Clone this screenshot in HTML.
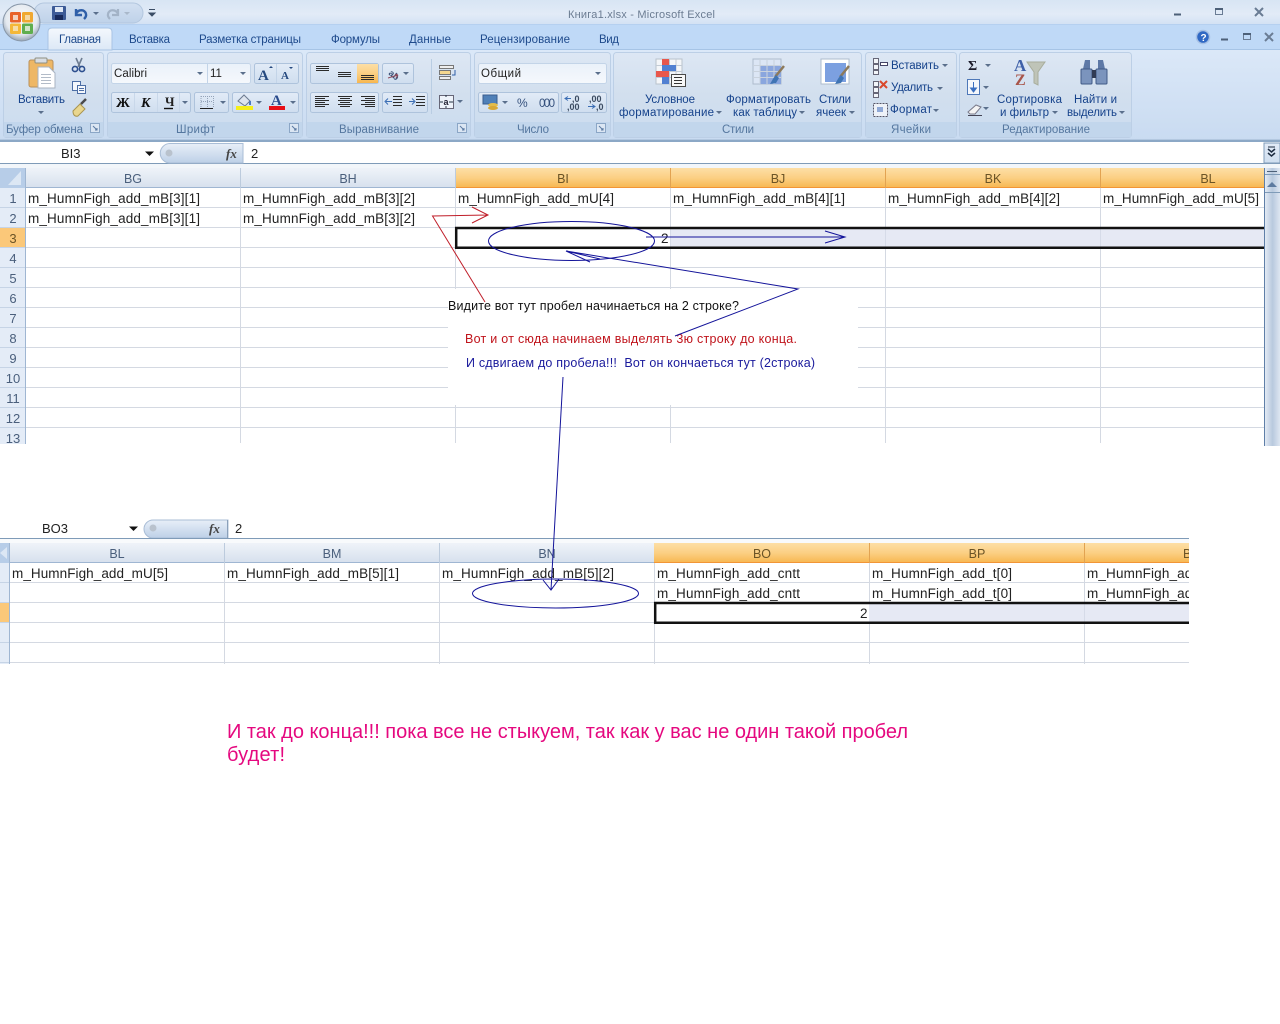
<!DOCTYPE html>
<html><head><meta charset="utf-8"><title>Книга1.xlsx - Microsoft Excel</title>
<style>
html,body{margin:0;padding:0;background:#fff;width:1280px;height:1024px;overflow:hidden}
svg{display:block;font-family:"Liberation Sans","Noto Sans CJK SC",sans-serif}
.r{font-size:11.5px;fill:#15428b}
.t{font-size:11.5px;fill:#1e4a8c}
.l{font-size:11.5px;fill:#55779f}
.c{font-size:13.5px;fill:#222}
.h{font-size:12.5px;fill:#4a5f7c;text-anchor:middle}
.hs{font-size:12.5px;fill:#6b5426;text-anchor:middle}
.n{font-size:13px;fill:#4a5f7c;text-anchor:middle}
.f{font-size:13px;fill:#222}
</style></head><body>
<svg width="1280" height="1024" viewBox="0 0 1280 1024" xmlns="http://www.w3.org/2000/svg">
<defs>
<linearGradient id="tb" x1="0" y1="0" x2="0" y2="1"><stop offset="0" stop-color="#d8e5f4"/><stop offset=".6" stop-color="#e2ebf7"/><stop offset="1" stop-color="#d3e2f4"/></linearGradient>
<linearGradient id="rb" x1="0" y1="0" x2="0" y2="1"><stop offset="0" stop-color="#dbe8f8"/><stop offset="1" stop-color="#c9dbf1"/></linearGradient>
<linearGradient id="gr" x1="0" y1="0" x2="0" y2="1"><stop offset="0" stop-color="#dde7f4"/><stop offset=".5" stop-color="#d2dfee"/><stop offset="1" stop-color="#cbdcf0"/></linearGradient>
<linearGradient id="tab" x1="0" y1="0" x2="0" y2="1"><stop offset="0" stop-color="#f4f8fd"/><stop offset="1" stop-color="#dce8f6"/></linearGradient>
<linearGradient id="btn" x1="0" y1="0" x2="0" y2="1"><stop offset="0" stop-color="#e2ebf7"/><stop offset="1" stop-color="#cfdeef"/></linearGradient>
<linearGradient id="box" x1="0" y1="0" x2="0" y2="1"><stop offset="0" stop-color="#eaf1fa"/><stop offset="1" stop-color="#f5f8fc"/></linearGradient>
<linearGradient id="org" x1="0" y1="0" x2="0" y2="1"><stop offset="0" stop-color="#fddfa6"/><stop offset=".5" stop-color="#fbcf83"/><stop offset="1" stop-color="#f7b64f"/></linearGradient>
<linearGradient id="hd" x1="0" y1="0" x2="0" y2="1"><stop offset="0" stop-color="#eff3f9"/><stop offset="1" stop-color="#d6e0ed"/></linearGradient>
<linearGradient id="pill" x1="0" y1="0" x2="0" y2="1"><stop offset="0" stop-color="#e8eff8"/><stop offset="1" stop-color="#bdd0e7"/></linearGradient>
<linearGradient id="sb" x1="0" y1="0" x2="1" y2="0"><stop offset="0" stop-color="#e3eaf4"/><stop offset=".5" stop-color="#b8c9de"/><stop offset="1" stop-color="#dde6f1"/></linearGradient>
<linearGradient id="qa" x1="0" y1="0" x2="0" y2="1"><stop offset="0" stop-color="#d3e0f1"/><stop offset="1" stop-color="#bfd2e9"/></linearGradient>
<radialGradient id="orb" cx=".5" cy=".4" r=".6"><stop offset="0" stop-color="#fbfcfe"/><stop offset=".7" stop-color="#e4e9ef"/><stop offset="1" stop-color="#96a5b5"/></radialGradient>
<clipPath id="cp2"><rect x="0" y="536" width="1189" height="130"/></clipPath>
<clipPath id="cp1"><rect x="0" y="165" width="1264" height="283"/></clipPath>
<g id="dn"><path d="M-3 0h6l-3 3z" fill="#5a6f8c"/></g>
<g id="launch"><rect x="-4.500" y="-4.500" width="9" height="9" fill="#dbe6f3" stroke="#8ba6c6"/><path d="M-2-2l4 4M2 0v2h-2" stroke="#5c7ba3" fill="none"/></g>
</defs>

<!-- title bar -->
<rect width="1280" height="24" fill="url(#tb)"/>
<rect y="24" width="1280" height="26" fill="#bfd9f7"/>
<rect y="24" width="1280" height="1" fill="#b5d0f0"/>
<rect y="49" width="1280" height="1" fill="#a6c4e6"/>
<!-- ribbon -->
<rect y="50" width="1280" height="90" fill="url(#rb)"/>
<rect y="139" width="1280" height="1" fill="#b3c8e0"/>
<rect y="140" width="1280" height="2" fill="#8ca8c6"/>
<text x="568" y="18" font-size="11" fill="#6b7c92" textLength="147">Книга1.xlsx - Microsoft Excel</text>

<!-- QAT -->
<rect x="34" y="3" width="109" height="20" rx="10" fill="url(#qa)" stroke="#b2c6de"/>
<!-- office orb -->
<circle cx="21.500" cy="22.500" r="18.500" fill="url(#orb)" stroke="#8796a8"/>
<g>
<rect x="10" y="12" width="11" height="10.500" rx="1.500" fill="#e8632a"/>
<rect x="22" y="12" width="11" height="10.500" rx="1.500" fill="#f0a830"/>
<rect x="10" y="23.500" width="11" height="10.500" rx="1.500" fill="#f4b838"/>
<rect x="22" y="23.500" width="11" height="10.500" rx="1.500" fill="#5fae4e"/>
<rect x="13" y="15" width="5" height="5" fill="#f7f7f2" opacity=".75"/><rect x="25" y="26" width="5" height="5" fill="#f7f7f2" opacity=".75"/><rect x="25" y="15" width="5" height="5" fill="#f7f7f2" opacity=".6"/><rect x="13" y="26" width="5" height="5" fill="#f7f7f2" opacity=".6"/>
</g>
<!-- save -->
<rect x="52" y="6" width="14" height="14" rx="1" fill="#3c5a96"/><rect x="55" y="7" width="8" height="5" fill="#dfe8f5"/><rect x="55" y="15" width="8" height="5" fill="#17295a"/>
<!-- undo / redo -->
<path d="M76 9v6h6M76 14c2-5 9-5 10 0 .5 2-1 4-2 5" fill="none" stroke="#2f5fa8" stroke-width="2.400"/>
<use href="#dn" x="96" y="12"/>
<path d="M118 9v6h-6M118 14c-2-5-9-5-10 0-.5 2 1 4 2 5" fill="none" stroke="#a3b3c7" stroke-width="2.200"/>
<path d="M124 12h6l-3 3z" fill="#a9b8ca"/>
<path d="M149 9.500h6M149 13h6l-3 3z" stroke="#3b4d66" fill="#3b4d66"/>

<!-- tabs -->
<path d="M48 50V32q0-4 4-4h56q4 0 4 4v18z" fill="url(#tab)" stroke="#a9c4e4"/>
<text class="t" x="59" y="43" textLength="42">Главная</text>
<text class="t" x="129" y="43" textLength="41">Вставка</text>
<text class="t" x="199" y="43" textLength="102">Разметка страницы</text>
<text class="t" x="331" y="43" textLength="49">Формулы</text>
<text class="t" x="409" y="43" textLength="42">Данные</text>
<text class="t" x="480" y="43" textLength="90">Рецензирование</text>
<text class="t" x="599" y="43" textLength="20">Вид</text>

<!-- window buttons -->
<path d="M1174 14.500h7" stroke="#4d6078" stroke-width="2"/>
<rect x="1215.500" y="8.500" width="7" height="6" fill="none" stroke="#6a7c94"/><path d="M1215 9h8" stroke="#4d6078" stroke-width="2"/>
<path d="M1255 8l8 8M1263 8l-8 8" stroke="#6a7c94" stroke-width="2"/>
<circle cx="1203" cy="37" r="6.500" fill="#2f68c4" stroke="#a6c0e4" stroke-width="1.500"/><text x="1200.500" y="41" font-size="10" font-weight="bold" fill="#fff">?</text>
<path d="M1221 39.500h7" stroke="#4d6078" stroke-width="2"/>
<rect x="1243.500" y="33.500" width="7" height="6" fill="none" stroke="#6a7c94"/><path d="M1243 34h8" stroke="#4d6078" stroke-width="2"/>
<path d="M1265 33l8 8M1273 33l-8 8" stroke="#6a7c94" stroke-width="2"/>

<!-- groups -->
<g fill="url(#gr)" stroke="#bccfe6">
<rect x="3.500" y="52.500" width="100" height="85" rx="3"/>
<rect x="107.500" y="52.500" width="195" height="85" rx="3"/>
<rect x="306.500" y="52.500" width="164" height="85" rx="3"/>
<rect x="474.500" y="52.500" width="136" height="85" rx="3"/>
<rect x="613.500" y="52.500" width="248" height="85" rx="3"/>
<rect x="865.500" y="52.500" width="91" height="85" rx="3"/>
<rect x="959.500" y="52.500" width="172" height="85" rx="3"/>
</g>
<g fill="#c2d6ec">
<rect x="4" y="122" width="99" height="15"/><rect x="108" y="122" width="194" height="15"/><rect x="307" y="122" width="163" height="15"/><rect x="475" y="122" width="135" height="15"/><rect x="614" y="122" width="247" height="15"/><rect x="866" y="122" width="90" height="15"/><rect x="960" y="122" width="171" height="15"/>
</g>
<text class="l" x="6" y="133" textLength="77">Буфер обмена</text>
<text class="l" x="176" y="133" textLength="39">Шрифт</text>
<text class="l" x="339" y="133" textLength="80">Выравнивание</text>
<text class="l" x="517" y="133" textLength="32">Число</text>
<text class="l" x="722" y="133" textLength="32">Стили</text>
<text class="l" x="891" y="133" textLength="40">Ячейки</text>
<text class="l" x="1002" y="133" textLength="88">Редактирование</text>
<use href="#launch" x="95" y="128"/><use href="#launch" x="294" y="128"/><use href="#launch" x="462" y="128"/><use href="#launch" x="601" y="128"/>

<!-- clipboard -->
<rect x="29" y="60" width="24" height="27" rx="2" fill="#eeb765" stroke="#b9905a"/>
<rect x="35" y="58" width="12" height="5" rx="1" fill="#d8dde3" stroke="#8f8f80"/>
<path d="M38 67h11l6 6v15H38z" fill="#fff" stroke="#a8b3c2"/>
<path d="M41 74.500h10M41 77.500h10M41 80.500h10M41 83.500h10" stroke="#b3bcc8"/>
<text class="r" x="18" y="103" textLength="47">Вставить</text>
<use href="#dn" x="41" y="111"/>
<!-- scissors -->
<path d="M76 58l4 9M82 58l-4 9" stroke="#6e7d92" stroke-width="1.600"/><circle cx="75" cy="69" r="2.600" fill="none" stroke="#2d4f8e" stroke-width="1.600"/><circle cx="82" cy="69" r="2.600" fill="none" stroke="#2d4f8e" stroke-width="1.600"/>
<!-- copy -->
<rect x="72.500" y="81.500" width="8" height="9" fill="#f5f8fc" stroke="#4d6fa6"/><rect x="77.500" y="85.500" width="8" height="8" fill="#f5f8fc" stroke="#4d6fa6"/><path d="M79 88.500h5M79 90.500h5" stroke="#4d6fa6"/>
<!-- brush -->
<path d="M73 111l7-7 5 5-7 7c-3 1-5-1-5-5z" fill="#e9d68e" stroke="#a8944f"/><path d="M81 104l5-5" stroke="#4a4a4a" stroke-width="2.500"/>

<!-- font -->
<rect x="111.500" y="63.500" width="139" height="20" rx="2" fill="url(#box)" stroke="#c3d4e8"/>
<path d="M207.500 63v20" stroke="#c3d4e8"/>
<text x="114" y="77" font-size="11.500" fill="#222" textLength="33">Calibri</text>
<text x="210" y="77" font-size="11.500" fill="#222">11</text>
<use href="#dn" x="200" y="72"/><use href="#dn" x="243" y="72"/>
<rect x="254.500" y="63.500" width="44" height="20" rx="2" fill="url(#btn)" stroke="#aec3dc"/>
<path d="M276.500 64v19" stroke="#c3d4e8"/>
<text x="258" y="80" font-size="15" font-weight="bold" font-family="Liberation Serif" fill="#25497f">A</text><path d="M269 68l2-2 2 2z" fill="#25497f"/>
<text x="281" y="79" font-size="11" font-weight="bold" font-family="Liberation Serif" fill="#25497f">A</text><path d="M289 67l2 2 2-2z" fill="#25497f"/>
<rect x="111.500" y="92.500" width="79" height="20" rx="2" fill="url(#btn)" stroke="#aec3dc"/>
<path d="M134.500 93v19M157.500 93v19M179.500 93v19" stroke="#c9d8ea"/>
<text x="116" y="107" font-size="14" font-weight="bold" font-family="Liberation Serif" fill="#111">Ж</text>
<text x="141" y="107" font-size="14" font-weight="bold" font-style="italic" font-family="Liberation Serif" fill="#111">К</text>
<text x="165" y="106" font-size="13" font-weight="bold" font-family="Liberation Serif" fill="#222">Ч</text><path d="M164 108.500h9" stroke="#111" stroke-width="1.400"/>
<use href="#dn" x="185" y="101"/>
<rect x="194.500" y="92.500" width="34" height="20" rx="2" fill="url(#btn)" stroke="#aec3dc"/>
<path d="M201 96.500h12M201 101.500h12M201 96v12M207.500 96v12M213.500 96v12" stroke="#94a3b8" stroke-dasharray="1 1"/><path d="M200 108.500h13" stroke="#222"/>
<use href="#dn" x="223" y="101"/>
<rect x="232.500" y="92.500" width="66" height="20" rx="2" fill="url(#btn)" stroke="#aec3dc"/>
<path d="M238 101l6-6 6 6-5 5z" fill="#dde4ee" stroke="#6b7a90"/><path d="M250 101v4" stroke="#4a7ac0" stroke-width="2"/>
<rect x="236" y="106" width="17" height="4" fill="#f5ef1a"/>
<use href="#dn" x="259" y="101"/>
<text x="271" y="105" font-size="15" font-weight="bold" font-family="Liberation Serif" fill="#2a4b8c">A</text>
<rect x="269" y="106" width="16" height="4" fill="#e80f17"/>
<use href="#dn" x="293" y="101"/>

<!-- align -->
<rect x="310.500" y="63.500" width="68" height="20" rx="2" fill="url(#btn)" stroke="#aec3dc"/>
<rect x="357" y="64" width="21" height="19" fill="url(#org)"/>
<path d="M316 66.500h13M316 68.500h13M316 70.500h13M338 72.500h13M338 74.500h13M338 76.500h13M361 75.500h13M361 77.500h13M361 79.500h13" stroke="#2b2b2b"/>
<rect x="382.500" y="63.500" width="31" height="20" rx="2" fill="url(#btn)" stroke="#aec3dc"/>
<text x="388" y="74" font-size="9" font-weight="bold" fill="#41557a" transform="rotate(40 388 74)">ab</text><path d="M388 78l10-3M398 75l-3-1M398 75l-2 3" stroke="#8d4a5b" fill="none"/><use href="#dn" x="406" y="72"/>
<path d="M431.500 59v55" stroke="#b9cde3"/>
<rect x="439.500" y="65.500" width="14" height="3" fill="#eee" stroke="#777"/><rect x="439.500" y="70.500" width="11" height="4" fill="#f5d78e" stroke="#777"/><rect x="439.500" y="76.500" width="11" height="3" fill="#eee" stroke="#777"/><path d="M455 70v5h-3" stroke="#2f5fa8" fill="none"/>
<rect x="439.500" y="95.500" width="14" height="13" fill="#eef3fa" stroke="#667"/><text x="443.500" y="105" font-size="9" font-weight="bold" fill="#223">a</text><path d="M446 95v2M446 106v2M440 102h3M449 102h4" stroke="#234"/><use href="#dn" x="460" y="100"/>
<rect x="310.500" y="92.500" width="68" height="20" rx="2" fill="url(#btn)" stroke="#aec3dc"/>
<path d="M315 96.500h14M315 98.500h10M315 100.500h14M315 102.500h10M315 104.500h14M315 106.500h10M338 96.500h14M340 98.500h10M338 100.500h14M340 102.500h10M338 104.500h14M340 106.500h10M361 96.500h14M365 98.500h10M361 100.500h14M365 102.500h10M361 104.500h14M365 106.500h10" stroke="#2b2b2b"/>
<rect x="382.500" y="92.500" width="45" height="20" rx="2" fill="url(#btn)" stroke="#aec3dc"/>
<path d="M393 96.500h9M393 99.500h9M393 102.500h9M393 105.500h9M416 96.500h9M416 99.500h9M416 102.500h9M416 105.500h9" stroke="#2b2b2b"/>
<path d="M392 101.500h-6m2-3l-3 3 3 3M409 101.500h5m-2-3l3 3-3 3" stroke="#3a6db4" fill="none"/>

<!-- number -->
<rect x="478.500" y="63.500" width="128" height="20" rx="2" fill="url(#box)" stroke="#c3d4e8"/>
<text x="481" y="77" font-size="11.500" fill="#222" textLength="40">Общий</text>
<use href="#dn" x="598" y="72"/>
<rect x="478.500" y="92.500" width="80" height="20" rx="2" fill="url(#btn)" stroke="#aec3dc"/>
<rect x="483" y="95" width="14" height="9" fill="#4f80b8" stroke="#3a5d8e"/><ellipse cx="493" cy="105" rx="5" ry="2" fill="#e4bc4a"/><ellipse cx="493" cy="108" rx="5" ry="2" fill="#d8a836"/>
<use href="#dn" x="505" y="101"/>
<text x="517" y="107" font-size="12" fill="#34507c" textLength="13">%</text>
<text x="539" y="107" font-size="11.500" fill="#34507c" textLength="16">000</text>
<rect x="561.500" y="92.500" width="45" height="20" rx="2" fill="url(#btn)" stroke="#aec3dc"/>
<text x="572" y="102" font-size="9" font-weight="bold" fill="#3a4a60">,0</text><text x="567" y="110" font-size="9" font-weight="bold" fill="#3a4a60">,00</text><path d="M565 98.500h6m-3-2l-3 2 3 2" stroke="#3a6db4" fill="none"/>
<text x="589" y="102" font-size="9" font-weight="bold" fill="#3a4a60">,00</text><text x="596" y="110" font-size="9" font-weight="bold" fill="#3a4a60">,0</text><path d="M588 106.500h7m-3-2l3 2-3 2" stroke="#3a6db4" fill="none"/>

<!-- styles -->
<rect x="656" y="59" width="26" height="25" fill="#f4f6f9" stroke="#b9c2cc"/>
<path d="M656 65.500h26M656 71.500h26M656 77.500h26M662.500 59v25M669.500 59v25M676 59v25" stroke="#c3cbd5"/>
<rect x="662" y="59" width="7" height="6" fill="#e8574c"/><rect x="662" y="65" width="7" height="6" fill="#5180d2"/><rect x="669" y="65" width="7" height="6" fill="#5180d2"/><rect x="656" y="71" width="13" height="6" fill="#e8574c"/><rect x="662" y="77" width="7" height="7" fill="#5180d2"/>
<rect x="671.500" y="74.500" width="14" height="12" fill="#f8f8f8" stroke="#4a4a4a"/><path d="M674 77.500h8M674 80.500h8M674 83.500h8" stroke="#333"/>
<text class="r" x="645" y="103" textLength="50">Условное</text>
<text class="r" x="619" y="116" textLength="95">форматирование</text><use href="#dn" x="719" y="111"/>
<rect x="753" y="59" width="28" height="25" fill="#dce6f5" stroke="#aebccd"/>
<rect x="760" y="66" width="21" height="18" fill="#8aa6de"/>
<path d="M753 65.500h28M753 71.500h28M753 77.500h28M760 59v25M767 59v25M774 59v25" stroke="#c9d2dd"/>
<path d="M784 66l-9 11" stroke="#8d7a5b" stroke-width="2.500"/><path d="M776 75l3 3-3 5-6 1c2-3 3-6 6-9z" fill="#3f74b4"/>
<text class="r" x="726" y="103" textLength="85">Форматировать</text>
<text class="r" x="733" y="116" textLength="64">как таблицу</text><use href="#dn" x="802" y="111"/>
<rect x="821" y="59" width="28" height="25" fill="#fff" stroke="#aebccd"/>
<rect x="825" y="63" width="21" height="19" fill="#7ca0e0"/>
<path d="M849 66l-9 11" stroke="#8d7a5b" stroke-width="2.500"/><path d="M841 75l3 3-3 5-6 1c2-3 3-6 6-9z" fill="#3f74b4"/>
<text class="r" x="819" y="103" textLength="32">Стили</text>
<text class="r" x="816" y="116" textLength="30">ячеек</text><use href="#dn" x="852" y="111"/>

<!-- cells group -->
<path d="M873.500 58.500h5v5h-5zM873.500 64.500h5v5h-5zM873.500 70.500h5v4h-5z" fill="#f2f5f9" stroke="#667"/><rect x="880.500" y="62.500" width="7" height="3" fill="#fff" stroke="#446"/>
<text class="r" x="891" y="69" textLength="48">Вставить</text><use href="#dn" x="945" y="64"/>
<path d="M873.500 81.500h5v5h-5zM873.500 87.500h5v5h-5zM873.500 93.500h5v4h-5z" fill="#f2f5f9" stroke="#667"/><path d="M880 81l7 7M887 81l-7 7" stroke="#d9482c" stroke-width="2"/>
<text class="r" x="891" y="91" textLength="42">Удалить</text><use href="#dn" x="940" y="87"/>
<rect x="873.500" y="103.500" width="14" height="13" fill="#eef2f8" stroke="#556" stroke-dasharray="2 1"/><rect x="877" y="107" width="6" height="5" fill="#8fa8d6"/>
<text class="r" x="890" y="113" textLength="42">Формат</text><use href="#dn" x="936" y="109"/>

<!-- editing -->
<text x="968" y="70" font-size="14" font-weight="bold" font-family="Liberation Serif" fill="#1a1a2a">Σ</text><use href="#dn" x="988" y="64"/>
<rect x="967.500" y="79.500" width="12" height="15" fill="#f4f7fb" stroke="#4e78b8"/><path d="M973.500 82v6m-3 0h6l-3 4z" fill="#3a6fc0" stroke="#3a6fc0"/><use href="#dn" x="986" y="86"/>
<path d="M968 112l8-7 5 2-6 7h-5z" fill="#f4f4f4" stroke="#7a7a8a"/><path d="M968 115.500h14" stroke="#445" /><use href="#dn" x="986" y="107"/>
<text x="1014" y="71" font-size="17" font-weight="bold" font-family="Liberation Serif" fill="#3f60a8">A</text>
<text x="1015" y="85" font-size="16" font-weight="bold" font-family="Liberation Serif" fill="#a8554a">Z</text>
<path d="M1027 62h18l-7 10v13l-4-2V72z" fill="#bfc4b8" stroke="#a8ad9c"/>
<path d="M1083 69l2-9h5v9zM1098 69v-9h5l2 9z" fill="#5d78a6"/>
<rect x="1081" y="69" width="11" height="15" rx="1" fill="#7b94bd" stroke="#405a87"/><rect x="1096" y="69" width="11" height="15" rx="1" fill="#7b94bd" stroke="#405a87"/><rect x="1092" y="70" width="4" height="8" fill="#303b55"/>
<text class="r" x="997" y="103" textLength="65">Сортировка</text>
<text class="r" x="1000" y="116" textLength="49">и фильтр</text><use href="#dn" x="1055" y="111"/>
<text class="r" x="1074" y="103" textLength="43">Найти и</text>
<text class="r" x="1067" y="116" textLength="50">выделить</text><use href="#dn" x="1122" y="111"/>

<!-- formula bar -->
<rect y="142" width="1280" height="21" fill="#fff"/>
<rect y="163" width="1280" height="1" fill="#7f9bb8"/>
<rect y="164" width="1280" height="4" fill="#f2f6fa"/>
<text class="f" x="61" y="158">BI3</text>
<path d="M145 151.500h9l-4.500 4.500z" fill="#111"/>
<path d="M243 143.500H170a9.750 9.750 0 0 0 0 19.500h73z" fill="url(#pill)" stroke="#a9bdd6"/>
<circle cx="169" cy="153" r="3.500" fill="#b9c2cd"/>
<text x="226" y="158" font-size="13" font-style="italic" font-weight="bold" font-family="Liberation Serif" fill="#444">fx</text>
<text class="f" x="251" y="158">2</text>
<rect x="1264" y="143" width="16" height="20" fill="url(#btn)" stroke="#7f9bb8"/>
<path d="M1268 149l3.500 3 3.500-3M1268 153l3.500 3 3.500-3" fill="none" stroke="#1c2c40" stroke-width="1.500"/>
<path d="M1268 147h7" stroke="#1c2c40" stroke-width="1"/>

<!-- grid 1 -->
<g clip-path="url(#cp1)">
<rect x="0" y="168" width="25" height="20" fill="#b7cde8"/><path d="M21 171v14H8z" fill="#dce7f4"/>
<rect x="26" y="168" width="429" height="20" fill="url(#hd)"/>
<rect x="455" y="168" width="809" height="20" fill="url(#org)"/>
<rect x="26" y="187" width="429" height="1" fill="#9fb6d2"/><rect x="455" y="187" width="809" height="1" fill="#f29536"/>
<path d="M240.500 168v20M455.500 168v20" stroke="#bccbdd"/><path d="M670.500 168v20M885.500 168v20M1100.500 168v20" stroke="#e2a351"/>
<text class="h" x="133" y="183">BG</text><text class="h" x="348" y="183">BH</text><text class="hs" x="563" y="183">BI</text><text class="hs" x="778" y="183">BJ</text><text class="hs" x="993" y="183">BK</text><text class="hs" x="1208" y="183">BL</text>
<rect x="0" y="188" width="25" height="260" fill="#e4ecf7"/>
<rect x="0" y="228" width="25" height="20" fill="#fbc879"/>
<path d="M25.500 168v280" stroke="#9fb6d2"/>
<path stroke="#d4d9e2" d="M26 207.500h1238M26 227.500h429M26 247.500h1238M26 267.500h1238M26 287.500h1238M26 307.500h1238M26 327.500h1238M26 347.500h1238M26 367.500h1238M26 387.500h1238M26 407.500h1238M26 427.500h1238M240.500 188v255M455.500 188v255M670.500 188v255M885.500 188v255M1100.500 188v255"/>
<path stroke="#c6d4e6" d="M0 207.500h25M0 227.500h25M0 247.500h25M0 267.500h25M0 287.500h25M0 307.500h25M0 327.500h25M0 347.500h25M0 367.500h25M0 387.500h25M0 407.500h25M0 427.500h25"/>
<text class="n" x="13" y="203">1</text><text class="n" x="13" y="223">2</text><text class="n" x="13" y="243" style="fill:#6b5426">3</text><text class="n" x="13" y="263">4</text><text class="n" x="13" y="283">5</text><text class="n" x="13" y="303">6</text><text class="n" x="13" y="323">7</text><text class="n" x="13" y="343">8</text><text class="n" x="13" y="363">9</text><text class="n" x="13" y="383">10</text><text class="n" x="13" y="403">11</text><text class="n" x="13" y="423">12</text><text class="n" x="13" y="443">13</text>
<rect x="0" y="444" width="26" height="6" fill="#fff"/>
<rect x="26" y="443" width="1240" height="6" fill="#fff"/>
<rect x="670" y="228" width="594" height="20" fill="#e6e9f4"/>
<path d="M885.500 229v18M1100.500 229v18M670.500 229v18" stroke="#d6dbe8"/>
<path d="M1264 228H456.200v19.700H1264" fill="none" stroke="#111" stroke-width="2.500"/>
<text class="c" x="28" y="203" textLength="172">m_HumnFigh_add_mB[3][1]</text>
<text class="c" x="243" y="203" textLength="172">m_HumnFigh_add_mB[3][2]</text>
<text class="c" x="458" y="203" textLength="156">m_HumnFigh_add_mU[4]</text>
<text class="c" x="673" y="203" textLength="172">m_HumnFigh_add_mB[4][1]</text>
<text class="c" x="888" y="203" textLength="172">m_HumnFigh_add_mB[4][2]</text>
<text class="c" x="1103" y="203" textLength="156">m_HumnFigh_add_mU[5]</text>
<text class="c" x="28" y="223" textLength="172">m_HumnFigh_add_mB[3][1]</text>
<text class="c" x="243" y="223" textLength="172">m_HumnFigh_add_mB[3][2]</text>
<text class="c" x="661" y="243">2</text>
</g>
<!-- scrollbar -->
<rect x="1265" y="168" width="15" height="278" fill="url(#sb)"/>
<path d="M1264.500 168v278" stroke="#5f7fa8"/>
<path d="M1267 171.500h10" stroke="#4d6078"/>
<path d="M1267 187l5-5 5 5z" fill="#5d7aa0"/>
<path d="M1265 192.500h15M1265 174.500h15" stroke="#7f9bb8"/>

<!-- white box -->
<rect x="448" y="289" width="410" height="116" fill="#fff"/>
<text x="448" y="310" font-size="12.500" fill="#111" textLength="291">Видите вот тут пробел начинаеться на 2 строке?</text>
<text x="465" y="343" font-size="12.500" fill="#c0141c" textLength="332">Вот и от сюда начинаем выделять 3ю строку до конца.</text>
<text x="466" y="367" font-size="12.500" fill="#1a1a9c" xml:space="preserve" textLength="349">И сдвигаем до пробела!!!  Вот он кончаеться тут (2строка)</text>

<!-- grid 2 -->
<text class="f" x="42" y="533">BO3</text>
<path d="M129 526.500h9l-4.500 4.500z" fill="#111"/>
<path d="M228 520H153a9 9 0 0 0 0 18h75z" fill="url(#pill)" stroke="#a9bdd6"/>
<circle cx="153" cy="528" r="3.500" fill="#b9c2cd"/>
<text x="209" y="533" font-size="13" font-style="italic" font-weight="bold" font-family="Liberation Serif" fill="#444">fx</text>
<text class="f" x="235" y="533">2</text>
<path d="M227.500 520v18" stroke="#8aa0ba"/>
<g clip-path="url(#cp2)">
<rect y="538" width="1189" height="1" fill="#7f9bb8"/>
<rect y="539" width="1189" height="4" fill="#f8fafc"/>
<rect x="0" y="543" width="9" height="20" fill="#b7cde8"/><path d="M7 547v12l-7-6z" fill="#dce7f4"/>
<rect x="10" y="543" width="644" height="20" fill="url(#hd)"/>
<rect x="654" y="543" width="535" height="20" fill="url(#org)"/>
<rect x="10" y="562" width="644" height="1" fill="#9fb6d2"/><rect x="654" y="562" width="535" height="1" fill="#f29536"/>
<path d="M224.500 543v20M439.500 543v20" stroke="#bccbdd"/><path d="M869.500 543v20M1084.500 543v20" stroke="#e2a351"/>
<text class="h" x="117" y="558">BL</text><text class="h" x="332" y="558">BM</text><text class="h" x="547" y="558">BN</text><text class="hs" x="762" y="558">BO</text><text class="hs" x="977" y="558">BP</text><text class="hs" x="1192" y="558">BQ</text>
<rect x="0" y="563" width="9" height="101" fill="#e4ecf7"/>
<rect x="0" y="603" width="9" height="20" fill="#fbc879"/>
<path d="M9.500 543v121" stroke="#9fb6d2"/>
<path stroke="#d4d9e2" d="M10 582.500h1179M10 602.500h644M10 622.500h1179M10 642.500h1179M10 662.500h1179M224.500 563v101M439.500 563v101M654.500 563v101M869.500 563v101M1084.500 563v101"/>
<path stroke="#c6d4e6" d="M0 582.500h9M0 602.500h9M0 622.500h9M0 642.500h9M0 662.500h9"/>
<rect x="869" y="603" width="320" height="20" fill="#e6e9f4"/>
<path d="M1084.500 604v18" stroke="#d6dbe8"/>
<path d="M1189 603H655.200v19.700H1189" fill="none" stroke="#111" stroke-width="2.500"/>
<text class="c" x="12" y="578" textLength="156">m_HumnFigh_add_mU[5]</text>
<text class="c" x="227" y="578" textLength="172">m_HumnFigh_add_mB[5][1]</text>
<text class="c" x="442" y="578" textLength="172">m_HumnFigh_add_mB[5][2]</text>
<text class="c" x="657" y="578" textLength="143">m_HumnFigh_add_cntt</text>
<text class="c" x="657" y="598" textLength="143">m_HumnFigh_add_cntt</text>
<text class="c" x="872" y="578" textLength="140">m_HumnFigh_add_t[0]</text>
<text class="c" x="872" y="598" textLength="140">m_HumnFigh_add_t[0]</text>
<text class="c" x="1087" y="578" textLength="140">m_HumnFigh_add_t[1]</text>
<text class="c" x="1087" y="598" textLength="140">m_HumnFigh_add_t[1]</text>
<text class="c" x="860" y="618">2</text>
</g>

<!-- annotations -->
<g fill="none" stroke-width="1">
<path d="M485 302L432.500 216L488 215M472 207L488 215L472 223" stroke="#c01f2a"/>
<g stroke="#14149a">
<ellipse cx="571.500" cy="241" rx="83" ry="19.500"/>
<path d="M646 237H845M825 231L845 237L825 243"/>
<path d="M675 336L798 289L566 251L590 262M566 251L600 259"/>
<path d="M563 377L551 590M543 580L551 590L559 579"/>
<ellipse cx="555.500" cy="593.500" rx="83" ry="14.500"/>
</g>
</g>
<text x="227" y="738" font-size="20" fill="#e5087f" textLength="681">И так до конца!!! пока все не стыкуем, так как у вас не один такой пробел</text>
<text x="227" y="761" font-size="20" fill="#e5087f" textLength="58">будет!</text>
</svg>
</body></html>
